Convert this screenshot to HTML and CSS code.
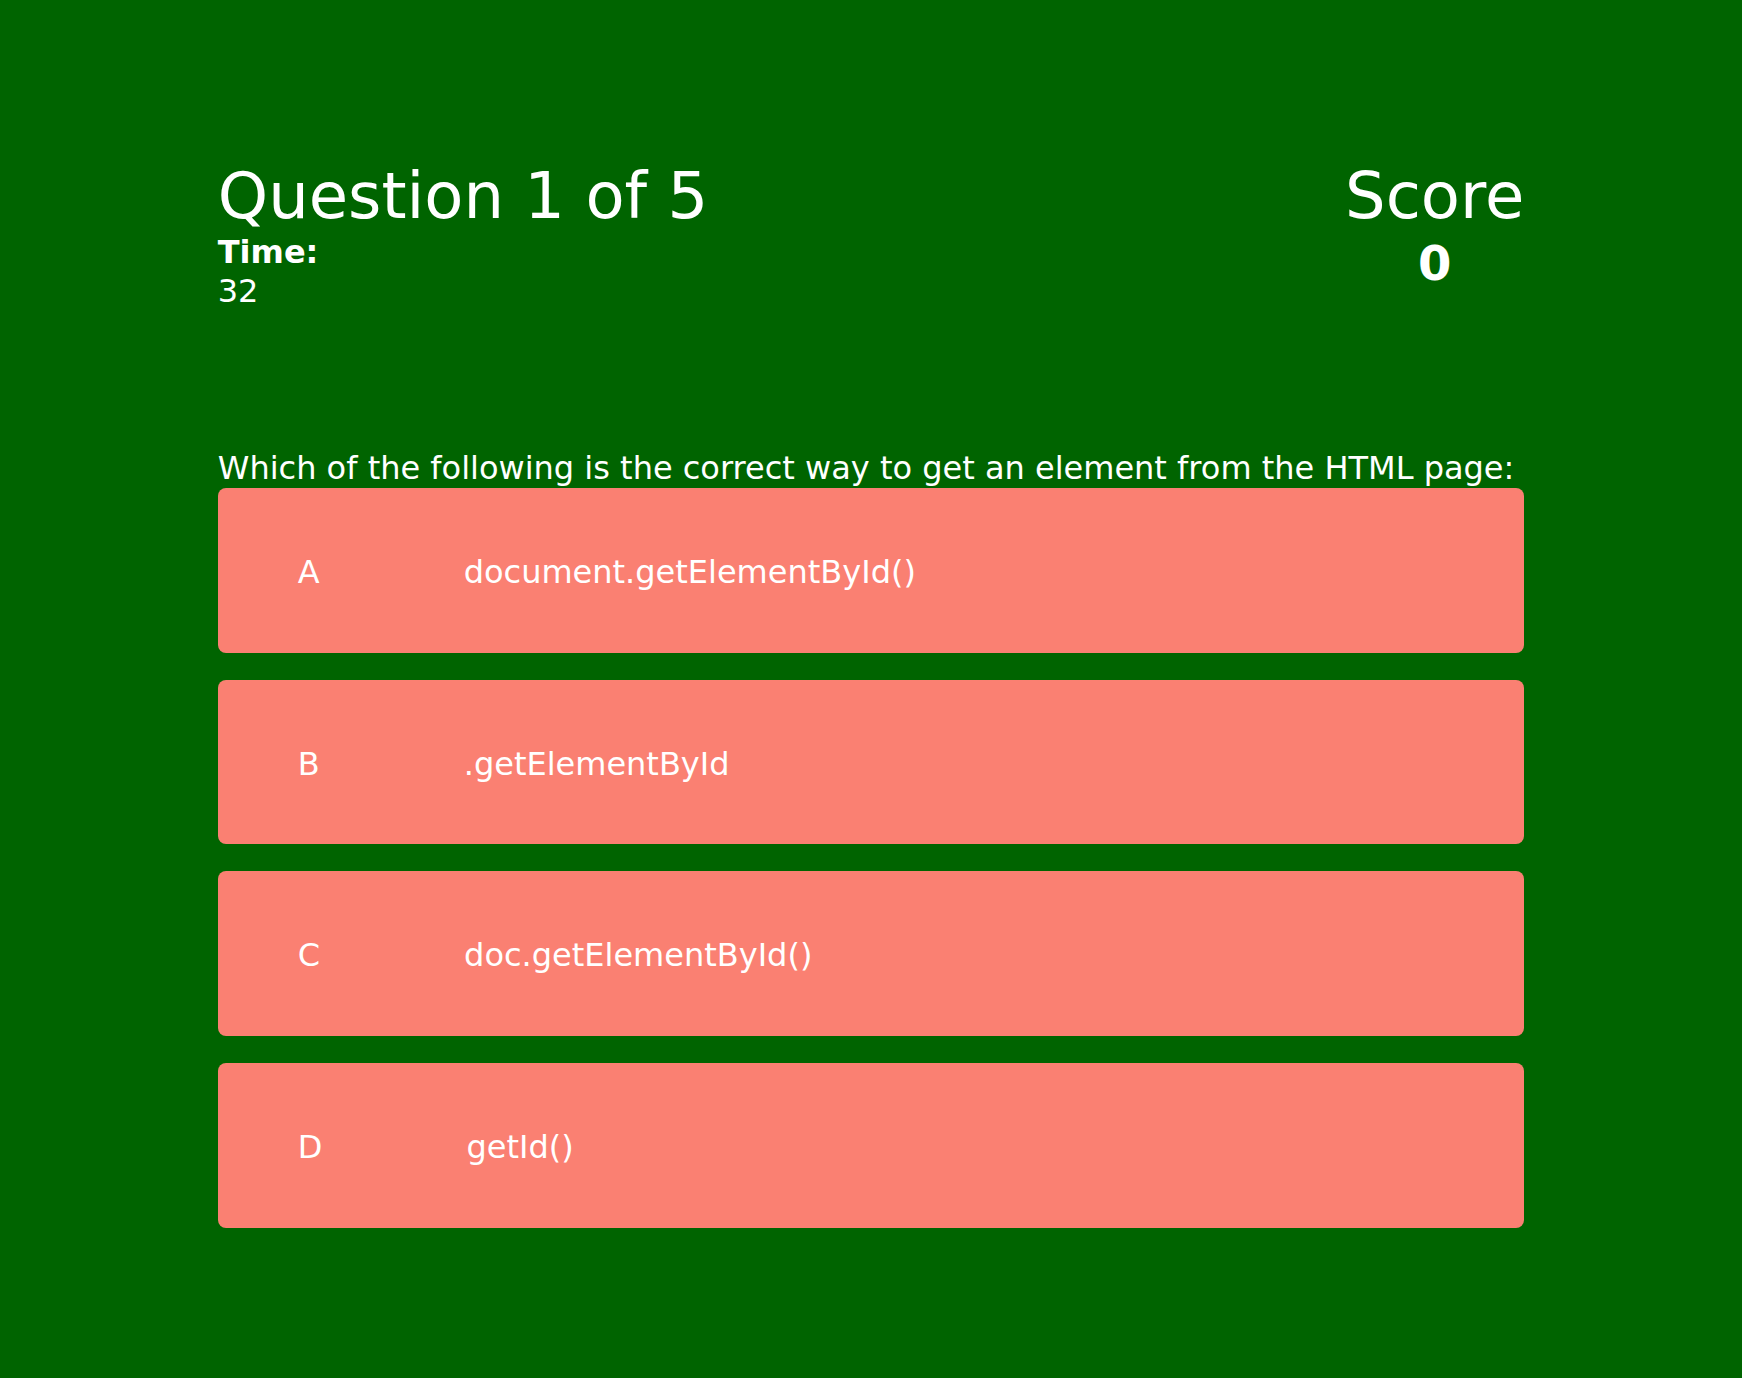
FILE: index.html
```html
<!DOCTYPE html>
<html lang="en">
<head>
<meta charset="utf-8">
<title>Quiz</title>
<link rel="stylesheet" href="styles.css">
</head>
<body>
<main class="quiz">
  <header class="header">
    <div class="status">
      <h1 class="title">Question 1 of 5</h1>
      <div class="time-label">Time:</div>
      <div class="time-value">32</div>
    </div>
    <div class="score">
      <h1 class="title">Score</h1>
      <div class="score-value">0</div>
    </div>
  </header>
  <section class="question">
    <p class="question-text">Which of the following is the correct way to get an element from the HTML page:</p>
    <div class="options">
      <div class="option"><span class="letter">A</span><span class="answer">document.getElementById()</span></div>
      <div class="option"><span class="letter">B</span><span class="answer">.getElementById</span></div>
      <div class="option"><span class="letter">C</span><span class="answer">doc.getElementById()</span></div>
      <div class="option"><span class="letter">D</span><span class="answer">getId()</span></div>
    </div>
  </section>
</main>
</body>
</html>
```
FILE: styles.css
```css
html, body {
  margin: 0;
  padding: 0;
}

body {
  background: #006400;
  color: #ffffff;
  font-family: "DejaVu Sans", Verdana, sans-serif;
  font-size: 32px;
  line-height: 1.215;
}

.quiz {
  width: 75%;
  margin: 0 auto;
  padding-top: 159px;
}

.header {
  display: flex;
  justify-content: space-between;
  align-items: flex-start;
}

.title {
  margin: 0;
  font-size: 64px;
  font-weight: normal;
  line-height: normal;
}

.time-label {
  font-weight: bold;
}

.score {
  text-align: center;
}

.score-value {
  font-size: 48px;
  font-weight: bold;
  margin-top: 1px;
}

.question {
  margin-top: 138px;
}

.question-text {
  margin: 0;
}

.options {
  display: flex;
  flex-direction: column;
  gap: 27px;
}

.option {
  display: flex;
  gap: 144px;
  background: #fa8072;
  border-radius: 8px;
  padding: 65px 0 61px 80px;
}
```
